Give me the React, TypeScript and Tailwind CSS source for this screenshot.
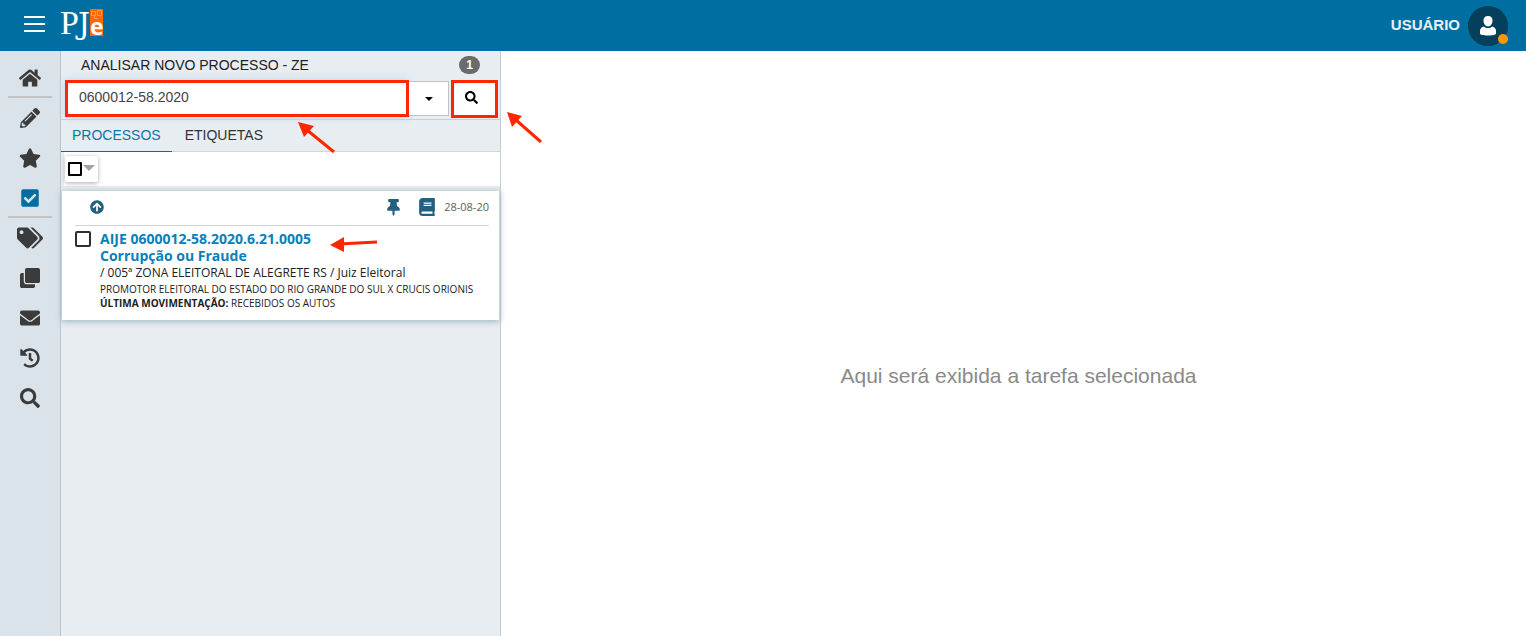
import React, { useState } from "react";
import {
  FaHome,
  FaPencilAlt,
  FaStar,
  FaCheckSquare,
  FaTags,
  FaClone,
  FaEnvelope,
  FaHistory,
  FaSearch,
  FaArrowCircleUp,
  FaThumbtack,
  FaBook,
} from "react-icons/fa";

const menuItems = [
  { label: "Início", icon: FaHome, size: "size-[22px]", divider: true },
  { label: "Editar", icon: FaPencilAlt, size: "size-5" },
  { label: "Favoritos", icon: FaStar, size: "size-[22px]" },
  { label: "Tarefas", icon: FaCheckSquare, size: "size-5", divider: true, active: true },
  { label: "Etiquetas", icon: FaTags, size: "size-[26px]" },
  { label: "Lote", icon: FaClone, size: "size-5" },
  { label: "Mensagens", icon: FaEnvelope, size: "size-5" },
  { label: "Histórico", icon: FaHistory, size: "size-5" },
  { label: "Pesquisar", icon: FaSearch, size: "size-5" },
];

interface ArrowProps {
  className: string;
  width: number;
  height: number;
  line: string;
  head: string;
}

// Red pointer drawn over the page
function Arrow({ className, width, height, line, head }: ArrowProps) {
  return (
    <svg
      className={`absolute z-10 pointer-events-none ${className}`}
      width={width}
      height={height}
      viewBox={`0 0 ${width} ${height}`}
      aria-hidden="true"
    >
      <path d={line} stroke="#ff2600" strokeWidth="3" fill="none" />
      <path d={head} fill="#ff2600" />
    </svg>
  );
}

function Logo() {
  return (
    <svg width="46" height="51" viewBox="0 0 46 51" className="overflow-visible" role="img" aria-label="PJe">
      <rect x="30" y="9" width="13" height="27" fill="#ff6a00" />
      <path d="M31.500 11.500h4v4h-4zM37.500 10.500h4v5h-4zM34.500 15.500v3h3" fill="none" stroke="#ff9a52" strokeWidth="1" />
      <text x="0" y="34" fontSize="34" fill="#fff" fontFamily="Liberation Serif, serif">P</text>
      <text x="18" y="34" fontSize="30" fill="#fff" fontFamily="DejaVu Serif, serif">J</text>
      <text x="30" y="35" fontSize="23" fontWeight="700" fill="#fff" fontFamily="Open Sans, sans-serif">e</text>
    </svg>
  );
}

function Header() {
  return (
    <header className="h-[51px] bg-[#006ea1] flex items-center justify-between pl-6 pr-[18px] text-white">
      <div className="flex items-center gap-[15px]">
        <button type="button" aria-label="Menu" className="flex flex-col gap-[5px] w-[21px] mb-[3px]">
          <span className="h-0.5 bg-white" />
          <span className="h-0.5 bg-white" />
          <span className="h-0.5 bg-white" />
        </button>
        <Logo />
      </div>
      <button type="button" className="flex items-center gap-2">
        <span className="font-bold text-[15px] text-[#e6f1f6]">USUÁRIO</span>
        <span className="relative size-10 rounded-full bg-[#043f5b] flex items-center justify-center">
          <svg width="18" height="22" viewBox="0 0 18 22" fill="#fff" aria-hidden="true">
            <path d="M9 1c3.100 0 4.500 2 4.500 4.800S11.500 11.500 9 11.500 4.500 8.600 4.500 5.800 5.900 1 9 1z" />
            <path d="M5 11.500c1 1 2.300 1.600 4 1.600s3-.6 4-1.600c2.400.6 4 2 4 4.500v2.500c0 1.200-3 2-8 2s-8-.8-8-2V16c0-2.500 1.600-3.900 4-4.500z" />
          </svg>
          <span className="absolute right-0 bottom-0.5 size-[10px] rounded-full bg-[#ff9800]" />
        </span>
      </button>
    </header>
  );
}

function Sidebar() {
  return (
    <nav className="w-[61px] shrink-0 bg-[#dae3ea] border-r border-[#bfc3c6] pt-[7px] px-2">
      {menuItems.map(({ label, icon: Icon, size, divider, active }) => (
        <a
          key={label}
          href="#"
          aria-label={label}
          className={`h-10 pt-0.5 flex justify-center items-center border-b-2 ${divider ? "border-[#c3c3c4]" : "border-transparent"} ${active ? "text-[#006ea1]" : "text-[#3b3b3b]"}`}
        >
          <Icon className={size} />
        </a>
      ))}
    </nav>
  );
}

function ProcessCard() {
  return (
    <article className="relative mt-[5px] mx-px bg-white pr-[10px] pl-[13px] pb-[10px] shadow-[0_1px_6px_1px_#a3bccb] font-['Open_Sans',sans-serif] text-[#212121]">
      <div className="flex items-center h-[35px] pb-0.5 border-b border-[#d0d3d5] text-[#23607f]">
        <FaArrowCircleUp className="size-[14px] ml-[15px]" />
        <FaThumbtack className="size-[17px] ml-auto" />
        <FaBook className="size-[18px] ml-4 mr-2" />
        <time className="text-[11px] text-[#616161]">28-08-20</time>
      </div>
      <div className="flex items-start gap-[9px] pt-1">
        <input
          type="checkbox"
          aria-label="Selecionar AIJE 0600012-58.2020.6.21.0005"
          className="appearance-none size-4 mt-px border-2 border-[#2f2f2f] rounded-xs bg-white shrink-0"
        />
        <div>
          <a href="#" className="block font-bold text-sm leading-[17px] text-[#0a80b9]">
            AIJE 0600012-58.2020.6.21.0005
            <br />
            Corrupção ou Fraude
          </a>
          <p className="text-xs leading-[18px]">/ 005ª ZONA ELEITORAL DE ALEGRETE RS / Juiz Eleitoral</p>
          <p className="text-[10px] leading-[14px] whitespace-nowrap">PROMOTOR ELEITORAL DO ESTADO DO RIO GRANDE DO SUL X CRUCIS ORIONIS</p>
          <p className="text-[10px] leading-[14px]">
            <strong>ÚLTIMA MOVIMENTAÇÃO:</strong> RECEBIDOS OS AUTOS
          </p>
        </div>
      </div>
      <Arrow className="left-[267px] top-[44px]" width={50} height={18} line="M10 9L48 7" head="M1 10L15 2V17z" />
    </article>
  );
}

function TaskPanel() {
  const [query, setQuery] = useState("0600012-58.2020");
  const [tab, setTab] = useState("PROCESSOS");

  return (
    <section className="relative w-[440px] shrink-0 bg-[#e8edf1] border-r border-[#c2ced6]">
      <div className="h-[29px] pb-0.5 flex items-center justify-between px-5">
        <h1 className="text-sm text-[#212121]">ANALISAR NOVO PROCESSO - ZE</h1>
        <span className="w-[21px] h-[18px] rounded-full bg-[#6b6b6b] text-white text-xs font-bold flex items-center justify-center">1</span>
      </div>

      <form className="flex pl-1 pr-0.5 pb-0.5 h-[40px] border-b border-[#c5d1da]" onSubmit={(e) => e.preventDefault()}>
        <input
          type="text"
          aria-label="Número do processo"
          value={query}
          onChange={(e) => setQuery(e.target.value)}
          className="flex-1 min-w-0 h-[37px] px-[11px] pb-[3px] bg-white border-3 border-[#ff2600] text-sm text-[#444] outline-none shadow-[0_0_8px_#bcd6e8]"
        />
        <button type="button" aria-label="Mais filtros" className="w-10 h-[35px] mt-px bg-white border-y border-r border-[#c4c4c4] flex items-center justify-center">
          <svg width="8" height="4" viewBox="0 0 8 4" aria-hidden="true">
            <path d="M0 0h8L4 4z" fill="#000" />
          </svg>
        </button>
        <button type="submit" aria-label="Pesquisar" className="w-[47px] h-[38px] ml-0.5 bg-white border-3 border-[#ff2600] text-black flex items-center justify-center pr-[6px] pb-[3px]">
          <FaSearch className="size-[13px]" />
        </button>
      </form>

      <div role="tablist" className="flex h-8 border-b border-[#cdd7de] text-sm text-[#333]">
        {["PROCESSOS", "ETIQUETAS"].map((name) => (
          <button
            key={name}
            type="button"
            role="tab"
            aria-selected={tab === name}
            onClick={() => setTab(name)}
            className={`h-8 border-b pb-0.5 ${tab === name ? "px-[11px] border-[#00709f] text-[#0a76a6]" : "px-[13px] border-transparent"}`}
          >
            {name}
          </button>
        ))}
      </div>

      <div className="h-[34px] ml-[3px] pl-px pt-1 bg-white">
        <div className="w-[33px] h-[26px] flex items-center pl-[3px] rounded-xs bg-white shadow-[0_1px_4px_#aaa]">
          <input type="checkbox" aria-label="Selecionar todos" className="appearance-none size-[14px] border-2 border-black rounded-[1px] bg-white" />
          <button type="button" aria-label="Opções de seleção" className="ml-px pb-[3px]">
            <svg width="12" height="6" viewBox="0 0 12 6" className="block" aria-hidden="true">
              <path d="M0 0h12L6 6z" fill="#a3a3a3" />
            </svg>
          </button>
        </div>
      </div>

      <ProcessCard />

      <Arrow className="left-[236px] top-[70px]" width={40} height={34} line="M10 9L37 31" head="M1 1L17 5L7 16z" />
      <Arrow className="left-[445px] top-[60px]" width={40} height={34} line="M10 9L35 31" head="M1 1L16 5L6 16z" />
    </section>
  );
}

export default function App() {
  return (
    <div className="min-h-screen flex flex-col bg-white font-['Liberation_Sans',sans-serif]">
      <Header />
      <div className="flex flex-1">
        <Sidebar />
        <TaskPanel />
        <main className="flex-1 flex items-center justify-center pt-16 pl-[10px]">
          <p className="text-[21px] text-[#8a8a8a]">Aqui será exibida a tarefa selecionada</p>
        </main>
      </div>
    </div>
  );
}
